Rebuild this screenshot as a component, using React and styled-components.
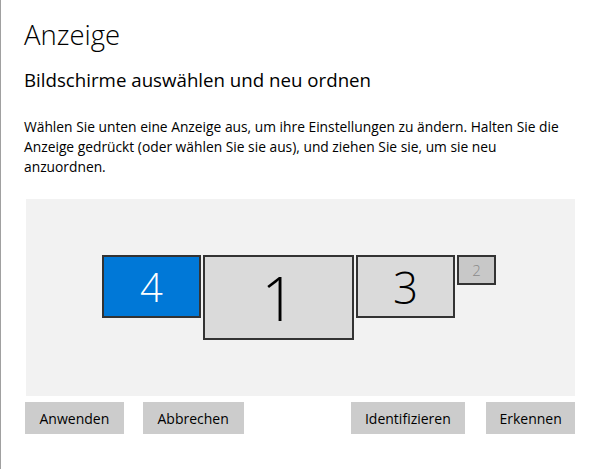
import React from "react";
import styled, { createGlobalStyle } from "styled-components";

const GlobalStyle = createGlobalStyle`
  html, body {
    margin: 0;
    padding: 0;
    background: #ffffff;
  }
  body {
    font-family: "Open Sans", "Noto Sans", "Liberation Sans", sans-serif;
    color: #000000;
  }
`;

const Page = styled.div`
  box-sizing: border-box;
  width: 589px;
  height: 469px;
  border-left: 1px solid #a0a0a0;
  padding: 17px 14px 0 23px;
`;

const Title = styled.h1`
  margin: 0;
  font-size: 27.5px;
  font-weight: 300;
  line-height: 36px;
`;

const Subtitle = styled.h2`
  margin: 14px 0 0;
  font-size: 18.7px;
  font-weight: 400;
  line-height: 26px;
`;

const Description = styled.p`
  margin: 24px 0 0;
  font-size: 13.8px;
  line-height: 20px;
  white-space: nowrap;
`;

const Canvas = styled.div`
  margin: 22px 0 0 2px;
  height: 197px;
  background: #f2f2f2;
  display: flex;
  justify-content: center;
  align-items: center;
`;

const MonitorRow = styled.div`
  display: flex;
  align-items: flex-start;
  gap: 2px;
  padding-right: 3px;
`;

const Monitor = styled.div`
  box-sizing: border-box;
  width: ${(p) => p.$w}px;
  height: ${(p) => p.$h}px;
  border: 2px solid #333333;
  background: ${(p) => (p.$active ? "#0078d7" : p.$dim ? "#c8c8c8" : "#dadada")};
  color: ${(p) => (p.$active ? "#ffffff" : p.$dim ? "#8a8a8a" : "#000000")};
  display: flex;
  align-items: center;
  justify-content: center;
  font-size: ${(p) => p.$size}px;
  font-weight: 300;
  line-height: 1;
`;

const ButtonBar = styled.div`
  display: flex;
  align-items: center;
  margin: 6px 0 0 1px;
`;

const Button = styled.button`
  box-sizing: border-box;
  height: 32px;
  width: ${(p) => p.$w}px;
  margin-left: ${(p) => p.$gap || 0}px;
  border: none;
  background: #cccccc;
  font-family: inherit;
  font-size: 14px;
  color: #000000;
  padding: 0;
`;

const monitors = [
  { id: 4, w: 99, h: 63, size: 40, active: true },
  { id: 1, w: 151, h: 85, size: 60 },
  { id: 3, w: 99, h: 63, size: 44 },
  { id: 2, w: 39, h: 30, size: 15, dim: true },
];

export default function App() {
  return (
    <>
      <GlobalStyle />
      <Page>
        <Title>Anzeige</Title>
        <Subtitle>Bildschirme auswählen und neu ordnen</Subtitle>
        <Description>
          Wählen Sie unten eine Anzeige aus, um ihre Einstellungen zu ändern. Halten Sie die
          <br />
          Anzeige gedrückt (oder wählen Sie sie aus), und ziehen Sie sie, um sie neu
          <br />
          anzuordnen.
        </Description>
        <Canvas>
          <MonitorRow>
            {monitors.map((m) => (
              <Monitor
                key={m.id}
                $w={m.w}
                $h={m.h}
                $size={m.size}
                $active={m.active}
                $dim={m.dim}
              >
                {m.id}
              </Monitor>
            ))}
          </MonitorRow>
        </Canvas>
        <ButtonBar>
          <Button $w={99}>Anwenden</Button>
          <Button $w={101} $gap={19}>Abbrechen</Button>
          <Button $w={115} $gap={107}>Identifizieren</Button>
          <Button $w={89} $gap={21}>Erkennen</Button>
        </ButtonBar>
      </Page>
    </>
  );
}
